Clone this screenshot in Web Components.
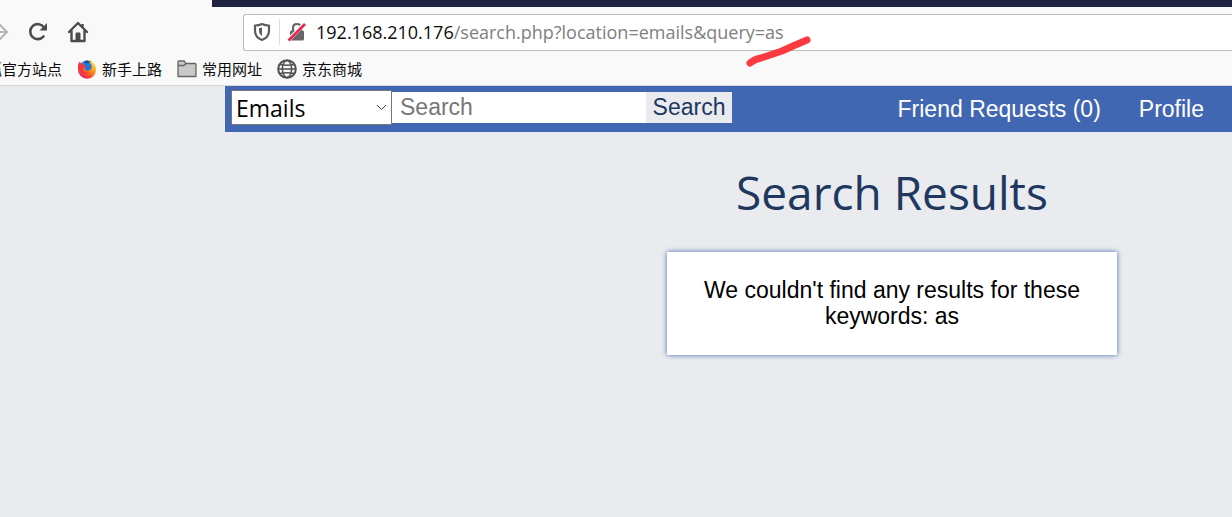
<!DOCTYPE html>
<html lang="en">
<head>
<meta charset="utf-8">
<title>Search Results</title>
<style>
html,body{margin:0;min-height:100%;background:#e9ebee;overflow-x:hidden}
body{font-family:"Liberation Sans",Arial,sans-serif;font-size:23px}
</style>
</head>
<body>
<browser-chrome>
  <address-bar slot="address"></address-bar>
  <bookmark-item slot="bookmarks">狐官方站点</bookmark-item>
  <bookmark-item slot="bookmarks">
    <svg slot="icon" width="20" height="20" viewBox="0 0 20 20"><defs><linearGradient id="fx" x1=".9" y1="0" x2=".3" y2="1"><stop offset="0" stop-color="#fff04a"/><stop offset=".4" stop-color="#ffac1c"/><stop offset=".7" stop-color="#ff5a23"/><stop offset="1" stop-color="#e5166b"/></linearGradient></defs><circle cx="10" cy="9" r="7.5" fill="#2377d8"/><path d="M13 0c2 2 2 3 3 4 2 1.500 3 4 3 6.500A9 9 0 0 1 1 11C.7 8 1.200 5 3 2.500L4 5l3-.5c-1 1-.8 2 .2 2.500l2 .5-1.700 1.500C8 12 11 12.500 13 11c2.500-2 2-5.500 0-7z" fill="url(#fx)"/><path d="M1 9C.7 6 2 3.500 3 2.500L4 5l3-.5c-1 1-.8 2 .2 2.500l2 .5L6 9.500c-.5 3 3 5 6 4-4 3-9 1-11-4.500z" fill="#f3363f"/><path d="M7 3c2-2 4-2 6 0-2 0-3 1-3 2z" fill="#1c4c9c"/></svg>
    新手上路</bookmark-item>
  <bookmark-item slot="bookmarks">
    <svg slot="icon" width="20" height="20" viewBox="0 0 20 20" fill="#c9c9c9" stroke="#656565" stroke-width="1.300" stroke-linejoin="round"><path d="M1 17.500V3q0-1 1-1h4.500q1 0 1.500 1l.7 1.500H18q1 0 1 1v12z"/><path d="M1 6.500h6l2-2" fill="none"/></svg>
    常用网址</bookmark-item>
  <bookmark-item slot="bookmarks">
    <svg slot="icon" width="20" height="20" viewBox="0 0 20 20" fill="none" stroke="#505050"><circle cx="10" cy="10" r="8.800" stroke-width="2"/><ellipse cx="10" cy="10" rx="4.600" ry="8.500" stroke-width="1.500"/><path d="M1 10h18M3 5.500q7 1.500 14 0M3 14.500q7-1.500 14 0" stroke-width="1.300"/></svg>
    京东商城</bookmark-item>
</browser-chrome>
<site-header>
  <search-form slot="search"></search-form>
  <nav-link href="#requests">Friend Requests (0)</nav-link>
  <nav-link href="#profile">Profile</nav-link>
</site-header>
<search-results>
  <span slot="title">Search Results</span>
  <result-card>We couldn't find any results for these keywords: as</result-card>
</search-results>

<script>
function define(name, html, setup) {
  const template = document.createElement('template');
  template.innerHTML = html;
  customElements.define(name, class extends HTMLElement {
    constructor() {
      super();
      this.attachShadow({mode: 'open'}).append(template.content.cloneNode(true));
    }
    connectedCallback() { if (setup) setup(this); }
  });
}

define('browser-chrome', `
<style>
:host{display:block;background:#f9f9fa;border-bottom:1px solid #d7d7db;overflow:hidden}
.strip{height:7px;margin-left:212px;background:#202340}
.tools{display:flex;align-items:center;height:50px}
button{border:0;background:none;padding:0;display:flex}
svg{display:block}
.nav{display:flex;align-items:center;width:243px;flex:none;gap:18px}
.nav button:first-child{margin-left:-13px}
slot[name=address]{display:block}
.address{flex:1;min-width:0}
.marks{display:flex;align-items:center;height:24px;padding-bottom:4px;gap:15px;margin-left:-13px}
</style>
<div class="strip"></div>
<div class="tools">
 <div class="nav">
  <button aria-label="Forward"><svg width="22" height="22" viewBox="0 0 22 22" fill="none" stroke="#b5b5b7" stroke-width="2.200" stroke-linecap="round" stroke-linejoin="round"><path d="M3 11h17M13 4l7 7-7 7"/></svg></button>
  <button aria-label="Reload"><svg width="22" height="22" viewBox="0 0 22 22"><path d="M16.500 15.500A7.500 7.500 0 1 1 17 6.500" fill="none" stroke="#4c4c4f" stroke-width="2.600" stroke-linecap="round"/><path d="M20 2v7.500h-7.500z" fill="#4c4c4f"/></svg></button>
  <button aria-label="Home"><svg width="22" height="22" viewBox="0 0 22 22" fill="none" stroke="#4c4c4f" stroke-width="2.400" stroke-linecap="round" stroke-linejoin="round"><path d="M2 11l9-9 9 9M4.500 10v10h13V10"/><path d="M9 19v-7h4v7z" fill="#4c4c4f" stroke-width="1"/><path d="M15.500 3v3" stroke-linecap="butt"/></svg></button>
 </div>
 <div class="address"><slot name="address"></slot></div>
</div>
<div class="marks"><slot name="bookmarks"></slot></div>`);

define('address-bar', `
<style>
:host{display:flex;align-items:center;box-sizing:border-box;height:37px;background:#fff;border:1px solid #bebebe;border-right:0;border-radius:3px 0 0 3px;font-family:"Open Sans","Noto Sans",sans-serif;font-size:18px;position:relative}
svg{flex:none;display:block}
.shield{margin-left:8px}
.sep{width:1px;height:26px;background:#dedede;margin:0 7px}
.url{margin-left:9px;white-space:nowrap;color:#808080;line-height:24px}
.url b{font-weight:400;color:#0c0c0d}
.mark{position:absolute;left:500px;top:20px}
</style>
<svg class="shield" width="20" height="20" viewBox="0 0 20 20" fill="none" stroke="#5c5c5e" stroke-width="2.200" stroke-linejoin="round"><path d="M10 2q3 1.500 7 1.500v5q0 7-7 9.500-7-2.500-7-9.500v-5Q7 3.500 10 2z"/><path d="M10 5.500v8.500q-3-2-3-5.500V6.200z" fill="#5c5c5e" stroke="none"/></svg>
<span class="sep"></span>
<svg width="20" height="20" viewBox="0 0 20 20"><path d="M6 9V6q0-4 4-4t4 4v3" fill="none" stroke="#666" stroke-width="2.200"/><rect x="3" y="8.500" width="14" height="10" rx="1.500" fill="#666"/><path d="M1 18.500L18 1" stroke="#fff" stroke-width="4"/><path d="M1.500 18.500L18 2" stroke="#e22850" stroke-width="2.600"/></svg>
<span class="url"><b>192.168.210.176</b>/search.php?location=emails&amp;query=as</span>
<svg class="mark" width="68" height="34" viewBox="0 0 68 34" fill="none" stroke="#fb3b40" stroke-width="7" stroke-linecap="round" stroke-linejoin="round"><path d="M6 28q5-4 11-5l21-7 11-5 14-6" /></svg>`);

define('bookmark-item', `
<style>
:host{display:block;flex:none;font:15px "Noto Sans CJK SC",sans-serif}
a{display:flex;align-items:center;gap:5px;color:#0c0c0d;text-decoration:none;line-height:22px}
a.plain{gap:0}
::slotted(svg){display:block}
</style>
<a href="#bookmark"><slot name="icon"></slot><span><slot></slot></span></a>`);

define('site-header', `
<style>
:host{display:flex;align-items:flex-start;box-sizing:border-box;height:46px;margin-left:225px;padding:4px 28px 0 6px;background:#4267b2}
nav{display:flex;gap:38px;margin-left:auto;padding-top:6px}
</style>
<slot name="search"></slot><nav><slot></slot></nav>`);

define('nav-link', `
<style>
:host{display:block;white-space:nowrap}
a{color:#fff;text-decoration:none;line-height:26px}
</style>
<a><slot></slot></a>`, el => el.shadowRoot.querySelector('a').setAttribute('href', el.getAttribute('href')));

define('search-form', `
<style>
:host{display:block}
form{display:flex;align-items:center;margin:0}
label{display:grid;align-items:center}
select,input,button{box-sizing:border-box;margin:0;border-radius:0;font:inherit}
select{grid-area:1/1;appearance:none;width:161px;height:35px;padding:0 4px;background:#fff;border:1px solid #777;color:#000;font:23px "Open Sans","Noto Sans",sans-serif}
label svg{grid-area:1/1;justify-self:end;margin-right:5px;pointer-events:none;z-index:1}
input{width:254px;height:31px;padding:0 8px;border:0;background:#fff;outline:0}
input::placeholder{color:#777;opacity:1}
button{width:86px;height:31px;padding:0;border:0;background:#e9ebee;color:#20375f}
</style>
<form>
<label><select aria-label="Search in"><option>Emails</option><option>Names</option></select>
<svg width="11" height="7" viewBox="0 0 11 7" fill="none" stroke="#444"><path d="M1 1l4.500 4.500L10 1"/></svg></label>
<input type="text" placeholder="Search" aria-label="Search"><button type="button">Search</button>
</form>`);

define('search-results', `
<style>
:host{display:flex;flex-direction:column;align-items:center;margin-left:225px;padding:28px 0 24px 327px}
h1{margin:0 0 28px;font:400 46px/64px "Open Sans","Noto Sans",sans-serif;color:#20375f;white-space:nowrap}
</style>
<h1><slot name="title"></slot></h1><slot></slot>`);

define('result-card', `
<style>
:host{display:block;box-sizing:border-box;width:450px;max-width:100%;padding:25px 30px 26px;background:#fff;box-shadow:0 0 5px #4267b2;text-align:center;color:#000}
p{margin:0;line-height:26px}
</style>
<p><slot></slot></p>`);
</script>
</body>
</html>
